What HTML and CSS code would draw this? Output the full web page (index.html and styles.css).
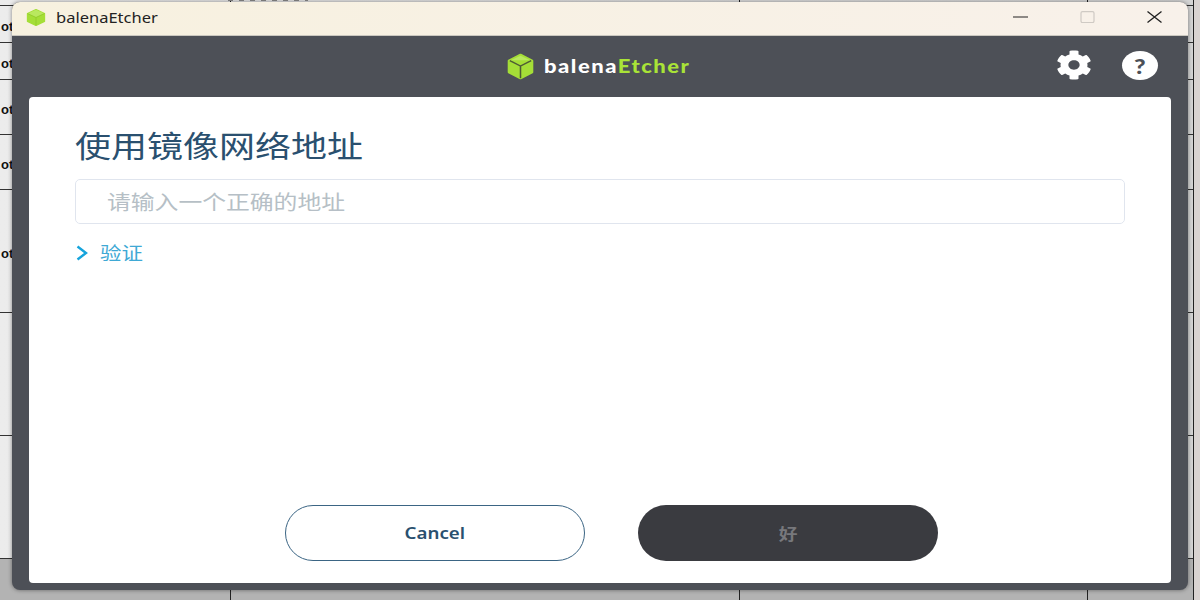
FILE: index.html
```html
<!DOCTYPE html>
<html>
<head>
    <title>balenaEtcher</title>
    <link rel="stylesheet" href="styles.css">
</head>
<body>
    <div class="desk">
        <div class="desk-row r0">
            <i class="tick t1"></i>
            <i class="tick t2"></i>
            <i class="tick t3"></i>
            <i class="specks"></i>
        </div>
        <div class="desk-row r1"><span class="cell-text">ot</span></div>
        <div class="desk-row r1"><span class="cell-text">ot</span></div>
        <div class="desk-row r3"><span class="cell-text">ot</span></div>
        <div class="desk-row r3"><span class="cell-text">ot</span></div>
        <div class="desk-row r4"><span class="cell-text">ot</span></div>
        <div class="desk-row r4"></div>
        <div class="desk-row r4"></div>
        <div class="desk-row r5">
            <i class="tick t1"></i>
            <i class="tick t2"></i>
            <i class="tick t3"></i>
        </div>
    </div>

    <div class="window">
        <div class="titlebar">
            <svg class="title-icon" viewBox="0 0 24 24" preserveAspectRatio="none">
                <path d="M12 1 22 6.500V17.500L12 23 2 17.500V6.500Z" fill="#a5de37" stroke="#a5de37" stroke-linejoin="round" stroke-width="2"/>
                <path d="M12 1 22 6.500 12 12 2 6.500Z" fill="#b9e85f"/>
                <path d="M2 6.500 12 12 22 6.500M12 12V23" fill="none" stroke="#93cc2a" stroke-width="1.200"/>
            </svg>
            <span class="title-text">balenaEtcher</span>
            <div class="win-controls">
                <svg class="win-btn" viewBox="0 0 15 12" preserveAspectRatio="none"><path d="M0 6H15" stroke="#222" stroke-width="1.200"/></svg>
                <svg class="win-btn" viewBox="0 0 15 12" preserveAspectRatio="none"><rect x="1" y="0.600" width="13" height="11" rx="1.500" fill="none" stroke="#cfcac4" stroke-width="1.200"/></svg>
                <svg class="win-btn" viewBox="0 0 15 12" preserveAspectRatio="none"><path d="M0.500 0.500 14.500 11.500M14.500 0.500 0.500 11.500" stroke="#222" stroke-width="1.300"/></svg>
            </div>
        </div>

        <div class="app-header">
            <div class="logo">
                <svg class="logo-icon" viewBox="0 0 30 30" preserveAspectRatio="none">
                    <path d="M15 2 27 8.500V21.500L15 28 3 21.500V8.500Z" fill="#a5de37" stroke="#a5de37" stroke-width="2.500" stroke-linejoin="round"/>
                    <path d="M4 8.500 15 14.500 26 8.500M15 14.500V28" fill="none" stroke="#4d5a35" stroke-width="1.600"/>
                    <path d="M5 8 15 3 25 8" fill="#b9e85f"/>
                </svg>
                <span class="logo-text">balena<b>Etcher</b></span>
            </div>
            <div class="header-icons">
                <svg class="gear" viewBox="0 0 512 512" preserveAspectRatio="none">
                    <path fill="#fff" d="M487.400 315.700l-42.600-24.600c4.300-23.200 4.300-47 0-70.200l42.600-24.600c4.900-2.800 7.100-8.600 5.500-14-11.100-35.600-30-67.800-54.700-94.600-3.800-4.100-10-5.100-14.800-2.300L380.800 110c-17.900-15.400-38.500-27.300-60.800-35.100V25.800c0-5.600-3.900-10.500-9.400-11.700-36.700-8.200-74.300-7.800-109.200 0-5.500 1.200-9.400 6.100-9.400 11.700V75c-22.200 7.900-42.800 19.800-60.800 35.100L88.700 85.500c-4.900-2.800-11-1.900-14.800 2.300-24.700 26.700-43.600 58.900-54.700 94.600-1.700 5.400.6 11.200 5.500 14L67.300 221c-4.300 23.200-4.300 47 0 70.200l-42.600 24.600c-4.900 2.800-7.100 8.600-5.500 14 11.100 35.600 30 67.800 54.700 94.600 3.800 4.100 10 5.100 14.800 2.300l42.600-24.600c17.900 15.400 38.500 27.300 60.800 35.100v49.200c0 5.600 3.900 10.500 9.400 11.700 36.700 8.200 74.300 7.800 109.200 0 5.500-1.200 9.400-6.100 9.400-11.700v-49.200c22.200-7.900 42.800-19.800 60.800-35.100l42.600 24.600c4.900 2.800 11 1.900 14.800-2.300 24.700-26.700 43.600-58.900 54.700-94.600 1.500-5.500-.7-11.300-5.600-14.100zM256 336c-44.100 0-80-35.900-80-80s35.900-80 80-80 80 35.900 80 80-35.900 80-80 80z"/>
                </svg>
                <div class="help"><span class="wide">?</span></div>
            </div>
        </div>

        <div class="card">
            <h1 class="card-title">使用镜像网络地址</h1>
            <div class="url-input"><span class="wide">请输入一个正确的地址</span></div>
            <div class="auth-toggle">
                <svg class="chevron" viewBox="0 0 12 16"><path d="M1.500 1.500 10 8 1.500 14.500" fill="none" stroke="#16a4dc" stroke-width="2.400"/></svg>
                <span class="wide">验证</span>
            </div>
            <div class="card-footer">
                <button class="btn btn-cancel"><span class="wide-center">Cancel</span></button>
                <button class="btn btn-ok"><span class="wide-center">好</span></button>
            </div>
        </div>
    </div>
</body>
</html>
```

FILE: styles.css
```css
html,
body {
    margin: 0;
    height: 600px;
    overflow: hidden;
}

body {
    font-family: "Noto Sans", "Noto Sans CJK SC", sans-serif;
    background: #d9d3d1;
}

/* the screenshot is stretched sideways, so the text is too */
.wide {
    display: inline-block;
    transform: scaleX(1.19);
    transform-origin: left center;
}

.wide-center {
    display: inline-block;
    transform: scaleX(1.17);
}

/* table of the app behind the window */
.desk {
    height: 600px;
    width: 1194px;
    box-sizing: border-box;
    border-right: 1px solid #222;
    background: linear-gradient(90deg, #ececec, #d4d4d4);
}

.desk-row {
    box-sizing: border-box;
    border-bottom: 1px solid #333;
    padding-top: 4px;
    font: bold 13px "Liberation Sans", sans-serif;
    color: #111;
    display: flex;
    align-items: center;
    position: relative;
    overflow: hidden;
}

.cell-text {
    margin-left: 1px;
}

.r0 { height: 6px; padding: 0; }
.r1 { height: 37px; }
.r3 { height: 55px; }
.r4 { height: 123px; }
.r5 { height: 42px; border-bottom: 0; background: #b3b3b3; }

.tick {
    position: absolute;
    top: 0;
    bottom: 0;
    width: 1px;
    background: #222;
}

.t1 { left: 230px; }
.t2 { left: 739px; }
.t3 { left: 1087px; }

.specks {
    position: absolute;
    left: 228px;
    top: 0;
    width: 80px;
    height: 1px;
    background: repeating-linear-gradient(90deg, #888 0 5px, transparent 5px 11px);
}

.window {
    position: absolute;
    left: 12px;
    top: 2px;
    width: 1176px;
    height: 588px;
    border-radius: 8px;
    overflow: hidden;
    background: #4d5057;
    box-shadow: 0 0 4px rgba(0, 0, 0, 0.45);
    display: flex;
    flex-direction: column;
}

.titlebar {
    height: 34px;
    flex: none;
    box-sizing: border-box;
    display: flex;
    align-items: center;
    padding: 0 26px 3px 14px;
    background: linear-gradient(90deg, #f7f1df, #f8f1ea);
    border-bottom: 1px solid #cbc8c0;
}

.title-icon {
    width: 20px;
    height: 17px;
}

.title-text {
    margin-left: 10px;
    font-size: 15px;
    color: #222;
    transform: scaleX(1.1);
    transform-origin: left center;
}

.win-controls {
    margin-left: auto;
    display: flex;
    gap: 52px;
}

.win-btn {
    width: 15px;
    height: 12px;
}

.app-header {
    height: 61px;
    flex: none;
    display: flex;
    align-items: center;
    justify-content: center;
    position: relative;
}

.logo {
    display: flex;
    align-items: center;
    gap: 9px;
}

.logo-icon {
    width: 29px;
    height: 27px;
}

.logo-text {
    font: 900 18px/20px Lato, sans-serif;
    letter-spacing: 1.250px;
    color: #fff;
    margin: 0 30px 2px 0;
    transform: scaleX(1.22);
    transform-origin: left center;
}

.logo-text b {
    color: #a9e337;
}

.header-icons {
    position: absolute;
    right: 30px;
    top: 14px;
    display: flex;
    align-items: center;
    gap: 30px;
}

.gear {
    width: 36px;
    height: 30px;
}

.help {
    width: 36px;
    height: 29px;
    border-radius: 50%;
    background: #fff;
    color: #4d5057;
    font: 900 21px/29px Lato, sans-serif;
    text-align: center;
}

.help .wide {
    transform-origin: center;
}

.card {
    flex: 1;
    margin: 0 17px 7px;
    background: #fff;
    border-radius: 4px;
    padding: 28px 46px 22px;
    display: flex;
    flex-direction: column;
    color: #2a506f;
}

.card-title {
    margin: 0;
    width: fit-content;
    font-size: 30px;
    font-weight: 400;
    line-height: 42px;
    transform: scaleX(1.2);
    transform-origin: left center;
}

.url-input {
    margin-top: 12px;
    height: 45px;
    box-sizing: border-box;
    border: 1px solid #e0e5ee;
    border-radius: 5px;
    padding-left: 31px;
    font-size: 20px;
    line-height: 45px;
    color: #b6bfc6;
}

.auth-toggle {
    margin-top: 16px;
    display: flex;
    align-items: center;
    gap: 12px;
    padding-left: 1px;
    font-size: 18px;
    line-height: 26px;
    color: #3fa9d5;
}

.chevron {
    width: 12px;
    height: 16px;
}

.card-footer {
    margin-top: auto;
    display: flex;
    justify-content: center;
    gap: 53px;
    padding-left: 23px;
}

.btn {
    width: 300px;
    height: 56px;
    border-radius: 28px;
    font-family: "Noto Sans", "Noto Sans CJK SC", sans-serif;
    font-size: 16px;
    font-weight: 600;
}

.btn-cancel {
    background: #fff;
    border: 1px solid #3b6584;
    color: #2a506f;
}

.btn-ok {
    background: #3a3b40;
    border: 0;
    color: #77787c;
}
```
